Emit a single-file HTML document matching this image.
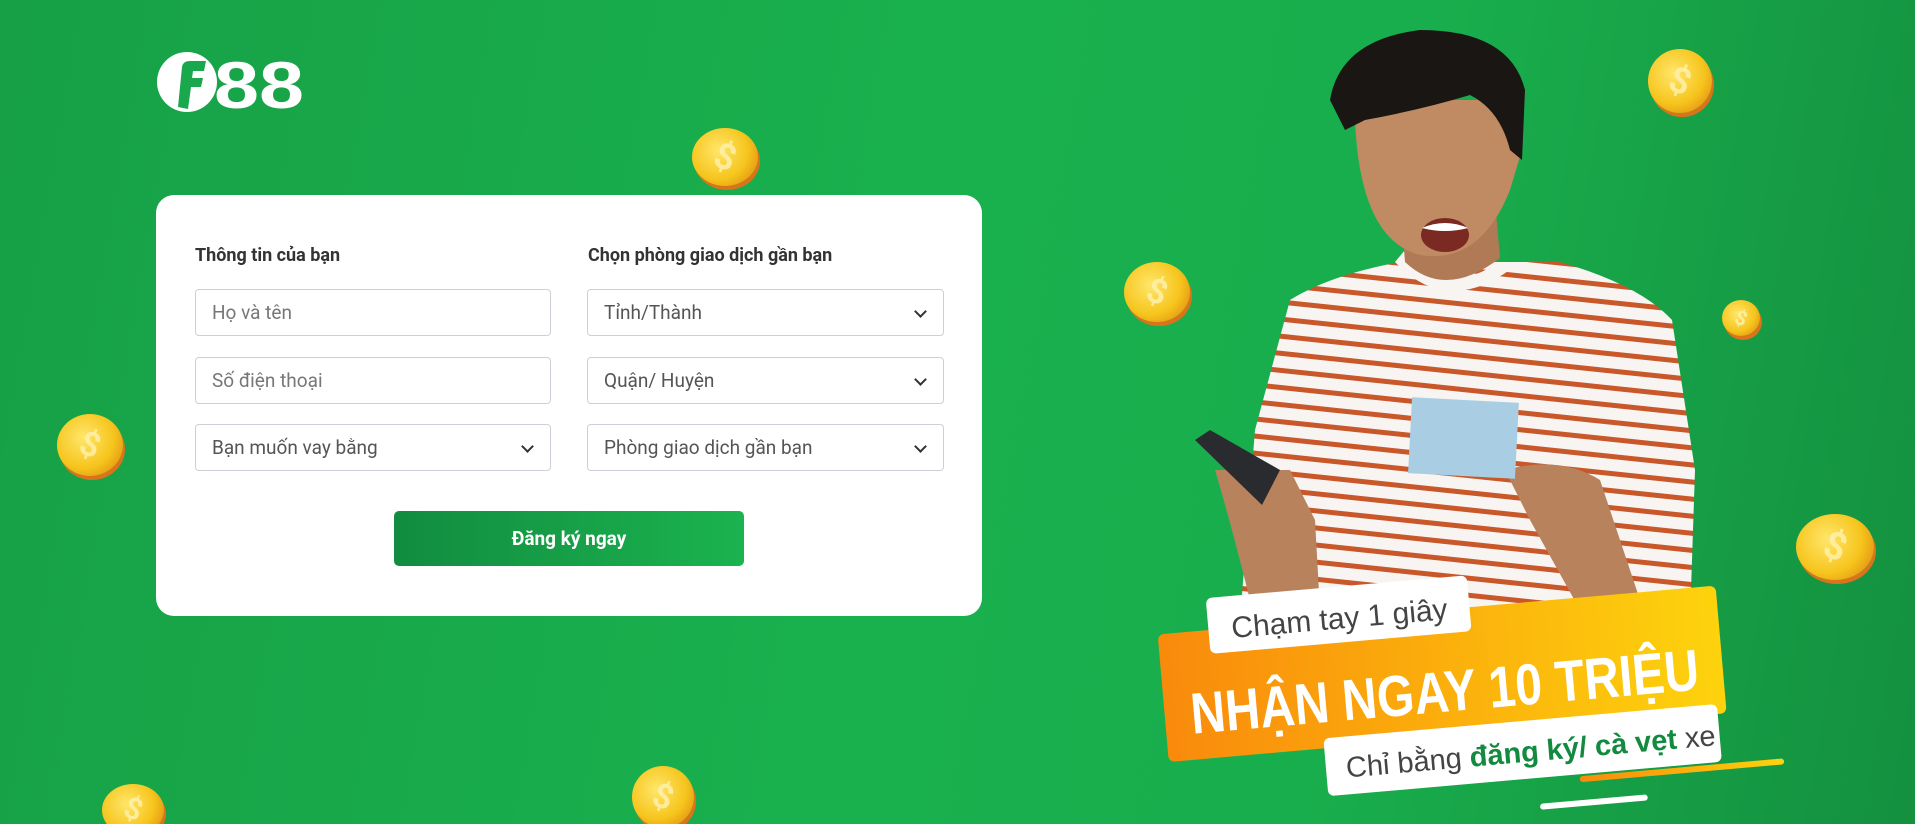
<!DOCTYPE html>
<html><head><meta charset="utf-8"><style>
*{margin:0;padding:0;box-sizing:border-box}
html{width:1915px;height:824px;overflow:hidden}
body{width:1915px;height:824px;overflow:hidden;position:relative;font-family:"Roboto","Liberation Sans",sans-serif;background:linear-gradient(100deg,#17a046 0%,#19b04e 45%,#19ae4d 70%,#14903f 100%)}
.card{position:absolute;left:156px;top:195px;width:826px;height:421px;background:#fff;border-radius:18px}
.h{position:absolute;top:245px;font-weight:bold;font-size:18px;color:#333}
.in{position:absolute;height:47px;border:1px solid #ccd0d6;border-radius:4px;background:#fff;font-size:19px;color:#555;padding-left:16px;line-height:45px}
.in.s::after{content:"";position:absolute;right:18px;top:17px;width:7px;height:7px;border-right:2px solid #333;border-bottom:2px solid #333;transform:rotate(45deg)}
.btn{position:absolute;left:394px;top:511px;width:350px;height:55px;border-radius:5px;background:linear-gradient(90deg,#128c40,#1bb34f);color:#fff;font-weight:bold;font-size:19px;text-align:center;line-height:55px}
.coin{position:absolute;border-radius:50%;background:radial-gradient(circle at 40% 38%,#ffe66a 0%,#f6c51d 55%,#e9a416 75%,#e07a12 100%);box-shadow:2px 4px 0 #d9741a}
.coin::after{content:"$";position:absolute;left:0;right:0;top:0;bottom:0;text-align:center;color:rgba(255,240,170,.85);font-weight:bold;transform:rotate(20deg)}
</style></head><body>
<svg style="position:absolute;left:156px;top:51px" width="150" height="62" viewBox="0 0 150 62">
<circle cx="31" cy="31" r="30" fill="#fff"/>
<path d="M22 56 L26 16 Q27 10 34 10 L50 10 L48 20 L37 20 L36 27 L47 27 L45 36 L35 36 L32 58 Z" fill="#19a84b"/>
<text x="58" y="57" font-family="Liberation Sans" font-weight="bold" font-size="66" fill="#fff" textLength="90" lengthAdjust="spacingAndGlyphs">88</text>
</svg>
<div class="coin" style="left:692px;top:128px;width:66px;height:58px;font-size:36px;line-height:58px"></div>
<div class="coin" style="left:1648px;top:49px;width:64px;height:64px;font-size:36px;line-height:64px"></div>
<div class="coin" style="left:1124px;top:262px;width:66px;height:60px;font-size:34px;line-height:60px"></div>
<div class="coin" style="left:57px;top:414px;width:66px;height:62px;font-size:34px;line-height:62px"></div>
<div class="coin" style="left:1722px;top:300px;width:38px;height:36px;font-size:20px;line-height:36px"></div>
<div class="coin" style="left:1796px;top:514px;width:78px;height:66px;font-size:38px;line-height:66px"></div>
<div class="coin" style="left:102px;top:784px;width:62px;height:52px;font-size:30px;line-height:52px"></div>
<div class="coin" style="left:632px;top:766px;width:62px;height:62px;font-size:34px;line-height:62px"></div>
<div class="card"></div>
<div class="h" style="left:195px">Thông tin của bạn</div>
<div class="h" style="left:588px">Chọn phòng giao dịch gần bạn</div>
<div class="in" style="left:195px;top:289px;width:356px;color:#777">Họ và tên</div>
<div class="in" style="left:195px;top:357px;width:356px;color:#777">Số điện thoại</div>
<div class="in s" style="left:195px;top:424px;width:356px">Bạn muốn vay bằng</div>
<div class="in s" style="left:587px;top:289px;width:357px">Tỉnh/Thành</div>
<div class="in s" style="left:587px;top:357px;width:357px">Quận/ Huyện</div>
<div class="in s" style="left:587px;top:424px;width:357px">Phòng giao dịch gần bạn</div>
<div class="btn">Đăng ký ngay</div>
<svg style="position:absolute;left:0;top:0" width="1915" height="824">
<defs><clipPath id="sh"><path d="M1290 300 Q1330 275 1400 262 L1560 262 Q1640 285 1672 320 L1695 470 L1690 620 L1240 620 L1255 430 Z"/></clipPath>
<pattern id="st" width="20" height="17" patternUnits="userSpaceOnUse" patternTransform="rotate(6)"><rect width="20" height="17" fill="#f7f4f1"/><rect y="11" width="20" height="5" fill="#c8572a"/></pattern>
<linearGradient id="og"><stop offset="0" stop-color="#f98a0c"/><stop offset="1" stop-color="#fdd30d"/></linearGradient></defs>
<g clip-path="url(#sh)"><rect x="1230" y="250" width="480" height="380" fill="url(#st)"/></g>
<path d="M1405 250 Q1440 300 1500 262 L1520 262 Q1450 320 1395 262 Z" fill="#f7f4f1"/>
<path d="M1400 200 L1405 262 Q1445 300 1500 258 L1495 200 Z" fill="#b07a57"/>
<path d="M1355 120 Q1360 240 1420 255 Q1480 265 1510 190 L1522 150 L1510 100 L1360 100 Z" fill="#c08a63"/>
<path d="M1330 100 Q1340 40 1420 30 Q1510 30 1525 90 L1522 160 L1510 150 Q1500 110 1470 95 Q1420 110 1365 120 L1345 130 Z" fill="#1a1614"/>
<ellipse cx="1445" cy="235" rx="24" ry="17" fill="#7a2a22"/><path d="M1422 228 Q1445 218 1468 228 Q1445 234 1422 228Z" fill="#fff"/>
<path d="M1215 470 Q1230 520 1250 600 L1320 610 L1315 520 L1290 470 Z" fill="#b8825c"/>
<path d="M1195 440 L1210 430 L1280 470 L1262 505 Z" fill="#2a2b2e"/>
<path d="M1505 470 Q1560 455 1600 480 L1640 600 L1580 610 L1530 520 Z" fill="#b8825c"/>
<rect x="1410" y="400" width="107" height="76" fill="#a9cde3" transform="rotate(3 1463 438)"/>
<g transform="translate(0,-18) rotate(-5 1440 690)">
<rect x="1162" y="628" width="560" height="128" rx="6" fill="url(#og)"/>
<rect x="1213" y="596" width="262" height="56" rx="6" fill="#fff"/>
<text x="1236" y="638" font-size="30" fill="#444" font-family="Liberation Sans">Chạm tay 1 giây</text>
<text x="1188" y="730" font-size="58" font-weight="bold" fill="#fff" font-family="Liberation Sans" textLength="510" lengthAdjust="spacingAndGlyphs">NHẬN NGAY 10 TRIỆU</text>
<rect x="1318" y="746" width="395" height="58" rx="6" fill="#fff"/>
<text x="1338" y="787" font-size="29" fill="#444" font-family="Liberation Sans">Chỉ bằng <tspan fill="#138a40" font-weight="bold">đăng ký/ cà vẹt</tspan> xe</text>
<rect x="1570" y="806" width="205" height="6" rx="3" fill="url(#og)"/>
<rect x="1528" y="830" width="108" height="6" rx="3" fill="#fff"/>
</g>
</svg>
</body></html>
